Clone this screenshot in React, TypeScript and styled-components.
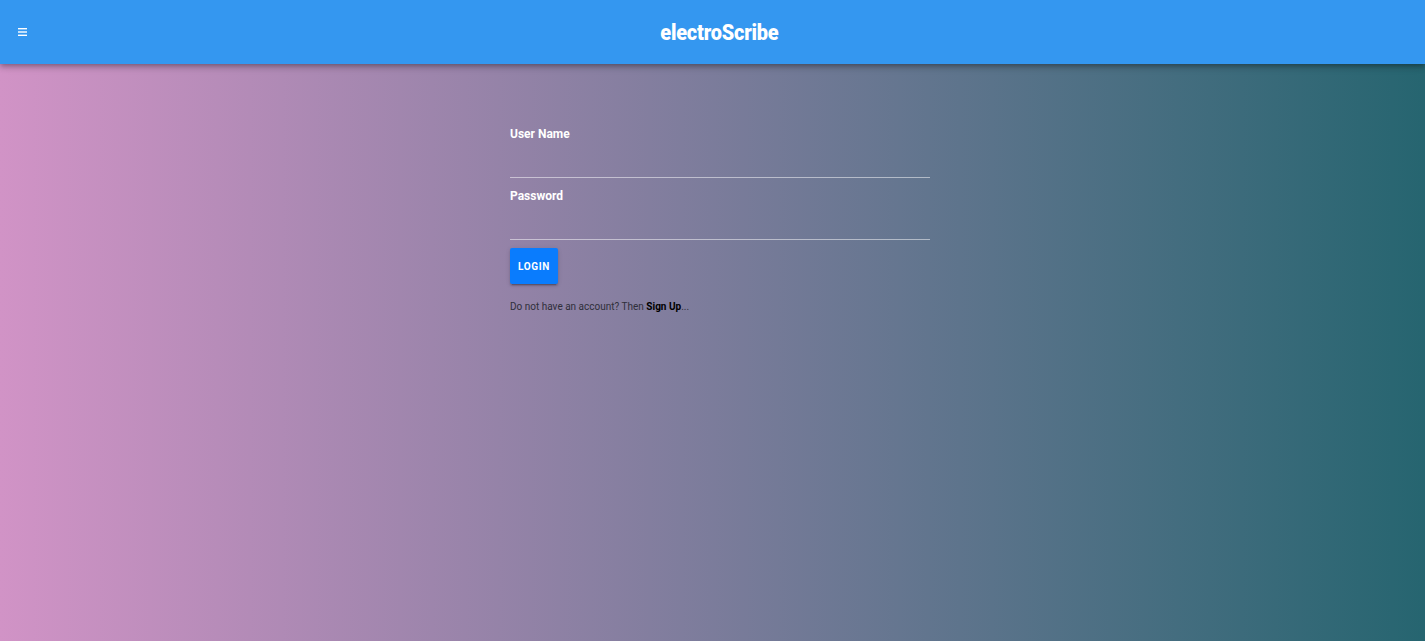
import React from "react";
import styled, { createGlobalStyle } from "styled-components";

const Global = createGlobalStyle`
  html, body { margin: 0; padding: 0; height: 100%; }
  body { font-family: Roboto, "Noto Sans", Arial, sans-serif; }
  #root { min-height: 100vh; }
`;

const Page = styled.div`
  min-height: 100vh;
  background: linear-gradient(to right, #d193c6 0%, #266570 100%);
  display: flex;
  flex-direction: column;
`;

const Header = styled.header`
  height: 64px;
  background: #3497f0;
  box-shadow: 0 2px 4px -1px rgba(0,0,0,0.2), 0 4px 5px 0 rgba(0,0,0,0.14), 0 1px 10px 0 rgba(0,0,0,0.12);
  display: grid;
  grid-template-columns: 1fr auto 1fr;
  align-items: center;
  padding: 0 16px;
  position: relative;
  z-index: 1;
`;

const MenuButton = styled.button`
  justify-self: start;
  width: 12px;
  height: 12px;
  padding: 0;
  margin-left: 0;
  border: none;
  background: transparent;
  display: flex;
  align-items: center;
  justify-content: center;
  cursor: pointer;
`;

const Title = styled.h1`
  margin: 0;
  color: #fff;
  font-family: Roboto, "Liberation Sans", Arial, sans-serif;
  font-weight: 900;
  font-size: 22px;
  letter-spacing: -0.2px;
  transform: scaleX(0.905);
  margin-left: 14px;
`;

const Main = styled.main`
  display: flex;
  justify-content: center;
  padding-top: 63px;
`;

const Form = styled.form`
  width: 420px;
  margin-left: 15px;
  display: flex;
  flex-direction: column;
`;

const Field = styled.label`
  display: flex;
  flex-direction: column;
  & + & { margin-top: 11px; }
`;

const LabelText = styled.span`
  color: #fff;
  font-size: 12px;
  font-weight: 700;
  line-height: 14px;
`;

const Input = styled.input`
  margin-top: 10px;
  height: 26px;
  border: none;
  border-bottom: 1px solid rgba(255,255,255,0.5);
  background: transparent;
  color: #fff;
  outline: none;
  padding: 0;
  font-family: inherit;
  font-size: 14px;
`;

const LoginButton = styled.button`
  align-self: flex-start;
  margin-top: 8px;
  width: 48px;
  height: 36px;
  border: none;
  border-radius: 2px;
  background: #0a7cfd;
  color: #fff;
  font-family: Roboto, sans-serif;
  font-size: 10px;
  font-weight: 700;
  letter-spacing: 0.6px;
  box-shadow: 0 3px 1px -2px rgba(0,0,0,0.2), 0 2px 2px 0 rgba(0,0,0,0.14), 0 1px 5px 0 rgba(0,0,0,0.12);
  padding: 0;
  cursor: pointer;
`;

const Footer = styled.p`
  margin: 17px 0 0;
  font-size: 10px;
  color: #2f2f3a;
`;

const SignUp = styled.a`
  color: #000;
  font-weight: 700;
  text-decoration: none;
`;

export default function App() {
  return (
    <>
      <Global />
      <Page>
        <Header>
          <MenuButton aria-label="menu">
            <svg width="9" height="8" viewBox="0 0 9 8">
              <rect x="0" y="0" width="9" height="1.4" fill="#fff" />
              <rect x="0" y="3.3" width="9" height="1.4" fill="#fff" />
              <rect x="0" y="6.6" width="9" height="1.4" fill="#fff" />
            </svg>
          </MenuButton>
          <Title>electroScribe</Title>
          <span />
        </Header>
        <Main>
          <Form onSubmit={(e) => e.preventDefault()}>
            <Field>
              <LabelText>User Name</LabelText>
              <Input type="text" />
            </Field>
            <Field>
              <LabelText>Password</LabelText>
              <Input type="password" />
            </Field>
            <LoginButton type="submit">LOGIN</LoginButton>
            <Footer>
              Do not have an account? Then <SignUp href="#">Sign Up</SignUp>...
            </Footer>
          </Form>
        </Main>
      </Page>
    </>
  );
}
